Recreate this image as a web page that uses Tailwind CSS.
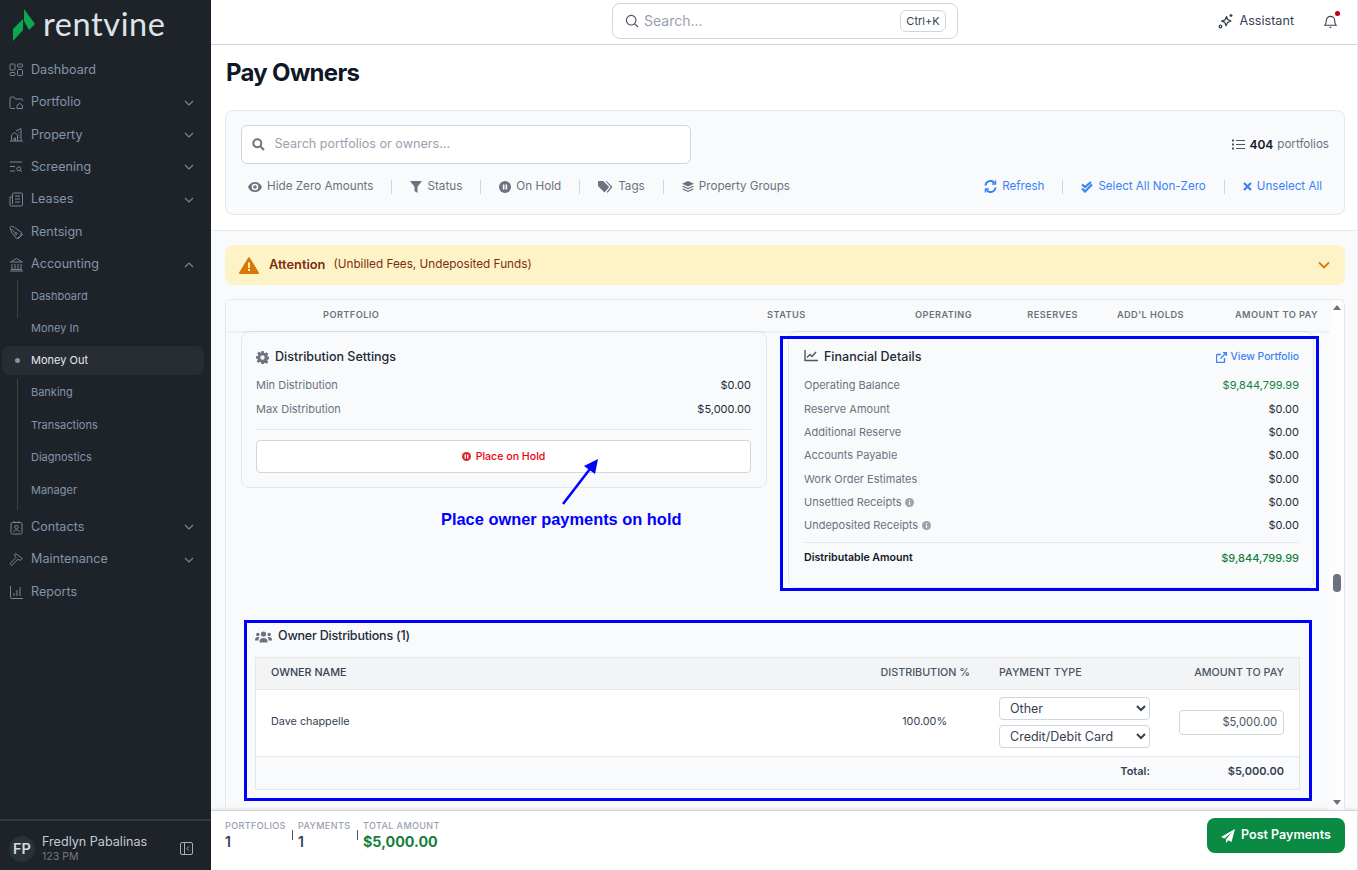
<!DOCTYPE html>
<html lang="en">
<head>
  <meta charset="UTF-8" />
  <title>Pay Owners - Rentvine</title>
  <script src="https://cdn.jsdelivr.net/npm/@tailwindcss/browser@4"></script>
</head>
<body class="font-['Inter',sans-serif] text-gray-800 bg-white">
<div class="relative flex h-[870px] w-[1358px] overflow-hidden">

  <!-- SIDEBAR -->
  <aside class="flex w-[211px] shrink-0 flex-col bg-[#1e2329] text-[#8294ab] text-[12.6px]">
    <div class="flex h-[50px] items-start">
      <svg width="40" height="44" viewBox="0 0 40 44" class="shrink-0"><polygon points="24,9 35,24 29,30 24,21" fill="#0ba84f"/><polygon points="13,29 23,19 23,30 13,41" fill="#0ba84f"/></svg>
      <span class="mt-[2px] ml-[3px] font-['Lato',sans-serif] text-[32.5px] leading-[44px] tracking-[0.6px] text-[#dfe3e7]">rentvine</span>
    </div>
    <nav class="mt-[4px] flex flex-col">
      <a class="flex h-[32.4px] items-center pl-[9px] pr-[17px]">
        <svg class="mr-[8px] text-[#7b8490]" width="14" height="14" viewBox="0 0 14 14" fill="none" stroke="currentColor"><rect x="1" y="1" width="5" height="6" rx="1"/><rect x="8.5" y="1" width="5" height="3" rx="1"/><rect x="1" y="9.5" width="5" height="3" rx="1"/><rect x="8.5" y="6.5" width="5" height="6" rx="1"/></svg>Dashboard</a>
      <a class="flex h-[32.4px] items-center pl-[9px] pr-[17px]">
        <svg class="mr-[7px] text-[#7b8490]" width="15" height="14" viewBox="0 0 15 14" fill="none" stroke="currentColor"><path d="M6 12.5H2.2a1.2 1.2 0 0 1-1.2-1.2V2.2A1.2 1.2 0 0 1 2.2 1h2.6l1.6 2h5.8A1.2 1.2 0 0 1 13.5 4.2V5"/><path d="M8 12.5V9.5l2.7-2.2 2.8 2.2v3z"/></svg>Portfolio
        <svg class="ml-auto" width="10" height="6" viewBox="0 0 10 6" fill="none" stroke="#7b8490" stroke-width="1.2"><path d="M1 1l4 4 4-4"/></svg></a>
      <a class="flex h-[32.4px] items-center pl-[9px] pr-[17px]">
        <svg class="mr-[7px] text-[#7b8490]" width="15" height="15" viewBox="0 0 15 15" fill="none" stroke="currentColor"><path d="M1 14h13M2.5 14V8l3-2.5 3 2.5v6M5 14v-3h1.5v3M7 4l5-2.5V14M9.5 5.5h1M9.5 8h1M9.5 10.5h1"/></svg>Property
        <svg class="ml-auto" width="10" height="6" viewBox="0 0 10 6" fill="none" stroke="#7b8490" stroke-width="1.2"><path d="M1 1l4 4 4-4"/></svg></a>
      <a class="flex h-[32.4px] items-center pl-[9px] pr-[17px]">
        <svg class="mr-[8px] text-[#7b8490]" width="14" height="14" viewBox="0 0 14 14" fill="none" stroke="currentColor"><path d="M1 2h12M1 6.5h5M1 11h5"/><circle cx="9.8" cy="8.8" r="2"/><path d="M11.3 10.3l1.7 1.7"/></svg>Screening
        <svg class="ml-auto" width="10" height="6" viewBox="0 0 10 6" fill="none" stroke="#7b8490" stroke-width="1.2"><path d="M1 1l4 4 4-4"/></svg></a>
      <a class="flex h-[32.4px] items-center pl-[9px] pr-[17px]">
        <svg class="mr-[7px] text-[#7b8490]" width="15" height="15" viewBox="0 0 15 15" fill="none" stroke="currentColor"><path d="M3.5 12V2.2A1.2 1.2 0 0 1 4.7 1h7.6a1.2 1.2 0 0 1 1.2 1.2v10.6a1.2 1.2 0 0 1-1.2 1.2H2.5A1.5 1.5 0 0 1 1 12.5V5h2.5"/><path d="M6 4h5M6 7h5M6 10h5"/></svg>Leases
        <svg class="ml-auto" width="10" height="6" viewBox="0 0 10 6" fill="none" stroke="#7b8490" stroke-width="1.2"><path d="M1 1l4 4 4-4"/></svg></a>
      <a class="flex h-[32.4px] items-center pl-[9px] pr-[17px]">
        <svg class="mr-[7px] text-[#7b8490]" width="15" height="15" viewBox="0 0 15 15" fill="none" stroke="currentColor"><path d="M1 2.5L2.5 1l3 1.5 7 5-1 4-4 2-5-6.5z"/><path d="M2.5 4l4 4"/><circle cx="7.2" cy="8.7" r="1"/><path d="M9 14l5-5"/></svg>Rentsign</a>
      <a class="flex h-[32.4px] items-center pl-[9px] pr-[17px]">
        <svg class="mr-[7px] text-[#7b8490]" width="15" height="15" viewBox="0 0 15 15" fill="none" stroke="currentColor"><path d="M1.5 5L7.5 1.5 13.5 5zM3 7v5M6 7v5M9 7v5M12 7v5M2 12.5h11M1 14h13"/></svg>Accounting
        <svg class="ml-auto" width="10" height="6" viewBox="0 0 10 6" fill="none" stroke="#7b8490" stroke-width="1.2"><path d="M1 5l4-4 4 4"/></svg></a>

      <!-- accounting children -->
      <div class="relative -mt-[1px] text-[11px]">
        <span class="absolute left-[17px] top-0 h-[38px] w-px bg-[#3d434a]"></span>
        <span class="absolute left-[17px] top-[99px] h-[131px] w-px bg-[#3d434a]"></span>
        <a class="relative flex h-[32.5px] items-center pl-[31px]">Dashboard</a>
        <a class="relative flex h-[32.5px] items-center pl-[31px]">Money In</a>
        <a class="relative ml-[2px] mt-[1.5px] flex h-[29px] w-[202px] items-center rounded-lg bg-[#282d33] pl-[29px] text-[#e5e9ee]">
          <span class="absolute left-[13px] h-[5px] w-[5px] rounded-full bg-[#8b929b]"></span>Money Out</a>
        <a class="relative mt-[1px] flex h-[32.5px] items-center pl-[31px]">Banking</a>
        <a class="relative flex h-[32.5px] items-center pl-[31px]">Transactions</a>
        <a class="relative flex h-[32.5px] items-center pl-[31px]">Diagnostics</a>
        <a class="relative flex h-[32.5px] items-center pl-[31px]">Manager</a>
      </div>

      <a class="mt-[5px] flex h-[32.4px] items-center pl-[9px] pr-[17px]">
        <svg class="mr-[7px] text-[#7b8490]" width="15" height="15" viewBox="0 0 15 15" fill="none" stroke="currentColor"><rect x="2" y="2.5" width="11" height="11.5" rx="1.5"/><path d="M5 1v2M10 1v2"/><circle cx="7.5" cy="7" r="1.7"/><path d="M4.5 12c.4-1.5 1.5-2 3-2s2.600.5 3 2"/></svg>Contacts
        <svg class="ml-auto" width="10" height="6" viewBox="0 0 10 6" fill="none" stroke="#7b8490" stroke-width="1.2"><path d="M1 1l4 4 4-4"/></svg></a>
      <a class="flex h-[32.4px] items-center pl-[9px] pr-[17px]">
        <svg class="mr-[7px] text-[#7b8490]" width="15" height="15" viewBox="0 0 15 15" fill="none" stroke="currentColor"><path d="M6.500 1.500l6.800 5-1.800 2-2.500-1.200-6.300 6.200-1.700-1.700 6-6.300-1.500-2.500z"/></svg>Maintenance
        <svg class="ml-auto" width="10" height="6" viewBox="0 0 10 6" fill="none" stroke="#7b8490" stroke-width="1.2"><path d="M1 1l4 4 4-4"/></svg></a>
      <a class="flex h-[32.4px] items-center pl-[9px] pr-[17px]">
        <svg class="mr-[7px] text-[#7b8490]" width="15" height="15" viewBox="0 0 15 15" fill="none" stroke="currentColor"><path d="M1.500 1v11.500a1 1 0 0 0 1 1H14M5 11V8M8 11V5M11 11V2"/></svg>Reports</a>
    </nav>

    <div class="mt-auto flex h-[51px] items-center border-t-2 border-[#343a40] pl-[9px] pr-[18px] pt-[6px]">
      <span class="flex h-[26px] w-[26px] items-center justify-center rounded-full bg-[#2a3237] text-[14.500px] font-semibold text-[#d5d9dd]">FP</span>
      <div class="ml-[7px]">
        <div class="text-[12.6px] leading-[15px] text-[#c5cad0]">Fredlyn Pabalinas</div>
        <div class="text-[10.6px] leading-[15px] text-[#6f7780]">123 PM</div>
      </div>
      <svg class="ml-auto" width="13" height="13" viewBox="0 0 13 13" fill="none" stroke="#aab0b7"><rect x="0.500" y="0.500" width="12" height="12" rx="1.500"/><path d="M4.500 1v11M9 4.500L7 6.500l2 2"/></svg>
    </div>
  </aside>

  <!-- MAIN -->
  <div class="flex min-w-0 flex-1 flex-col border-r border-gray-200">
    <header class="relative flex h-[45px] shrink-0 items-center border-b border-gray-300 bg-white pr-[20px]">
      <div class="absolute left-[401px] top-[3px] flex h-[36px] w-[346px] items-center rounded-lg border border-gray-300 pl-[12px] pr-[11px]">
        <svg width="14" height="14" viewBox="0 0 14 14" fill="none" stroke="#4b5563" stroke-width="1.200"><circle cx="6.200" cy="6.200" r="4.800"/><path d="M9.800 9.800L13 13"/></svg>
        <span class="ml-[5px] -mt-[1px] text-[14px] text-gray-400">Search...</span>
        <span class="ml-auto flex h-[22px] w-[46px] items-center justify-center rounded-md border border-gray-300 text-[11px] text-gray-700">Ctrl+K</span>
      </div>
      <div class="ml-auto flex items-center -mt-[1px]">
        <svg width="16" height="16" viewBox="0 0 16 16" fill="none" stroke="#374151" stroke-width="1.300" stroke-linejoin="round"><path d="M8.500 3.500l1.300 3.200 3.200 1.300-3.200 1.300-1.800 3.400-1.100-3.300-3.300-1.300 3.500-1.300z"/><path d="M13 1v3M11.500 2.500h3"/><circle cx="2.500" cy="13.500" r="1.300"/></svg>
        <span class="ml-[6px] text-[12.600px] text-gray-700">Assistant</span>
        <span class="relative ml-[30px] block">
          <svg class="block" width="13" height="15" viewBox="0 0 14 15" fill="none" stroke="#374151" stroke-width="1.200"><path d="M1 11.500c1-1 1.500-2 1.500-5a4.500 4.500 0 0 1 9 0c0 3 .5 4 1.500 5z"/><path d="M6 13.800h2"/></svg>
          <span class="absolute -right-[3px] -top-[3px] h-[5px] w-[5px] rounded-full bg-red-700"></span>
        </span>
      </div>
    </header>

    <!-- page head + filters -->
    <section class="h-[186px] shrink-0 border-b border-gray-200 bg-white pl-[14px] pr-[12px]">
      <h1 class="ml-px mt-[12px] text-[24px] font-bold leading-[32px] tracking-[-0.7px] text-gray-900">Pay Owners</h1>
      <div class="mt-[21px] h-[105px] rounded-lg border border-gray-200 bg-[#f9fafb] px-[15px] pt-[14px]">
        <div class="flex items-center justify-between">
          <div class="flex h-[39px] w-[450px] items-center rounded-md border border-gray-300 bg-white pl-[10px]">
            <svg width="13" height="13" viewBox="0 0 13 13" fill="none" stroke="#6b7280" stroke-width="2"><circle cx="5.300" cy="5.300" r="4"/><path d="M8.500 8.500L12 12"/></svg>
            <span class="ml-[9.500px] text-[12.600px] text-gray-400">Search portfolios or owners...</span>
          </div>
          <div class="flex items-center text-[11.6px] text-gray-500">
            <svg width="13" height="11" viewBox="0 0 13 11" fill="#4b5563"><rect x="0" y="0.500" width="2" height="2"/><rect x="0" y="4.500" width="2" height="2"/><rect x="0" y="8.500" width="2" height="2"/><rect x="4" y="1" width="9" height="1"/><rect x="4" y="5" width="9" height="1"/><rect x="4" y="9" width="9" height="1"/></svg>
            <b class="ml-[4px] text-[12px] font-semibold text-gray-900">404</b><span class="ml-[4px]">portfolios</span>
          </div>
        </div>
        <div class="mt-[13px] flex h-[20px] items-center pl-[7px] text-[11.7px] text-gray-500">
          <svg width="14" height="10" viewBox="0 0 14 10" fill="#6b7280"><path d="M7 0C3.800 0 1.200 2 0 5c1.200 3 3.800 5 7 5s5.800-2 7-5c-1.200-3-3.800-5-7-5zm0 8.300A3.300 3.300 0 1 1 7 1.700a3.300 3.300 0 0 1 0 6.600zM7 3.200a1.800 1.800 0 1 0 0 3.600 1.800 1.800 0 0 0 0-3.600z"/></svg>
          <span class="ml-[5px]">Hide Zero Amounts</span>
          <span class="ml-[18px] h-[14px] w-px bg-gray-300"></span>
          <svg class="ml-[18px]" width="12" height="12" viewBox="0 0 12 12" fill="#6b7280"><path d="M0 0h12L7.500 5.800V12L4.500 10V5.800z"/></svg>
          <span class="ml-[5px]">Status</span>
          <span class="ml-[18px] h-[14px] w-px bg-gray-300"></span>
          <svg class="ml-[18px]" width="12" height="12" viewBox="0 0 12 12"><circle cx="6" cy="6" r="6" fill="#6b7280"/><rect x="3.800" y="3.500" width="1.700" height="5" fill="#f9fafb"/><rect x="6.500" y="3.500" width="1.700" height="5" fill="#f9fafb"/></svg>
          <span class="ml-[5px]">On Hold</span>
          <span class="ml-[18px] h-[14px] w-px bg-gray-300"></span>
          <svg class="ml-[18px]" width="15" height="12" viewBox="0 0 15 12" fill="#6b7280"><path d="M0 1a1 1 0 0 1 1-1h4.200l6 6-4.700 5.500L0 5z"/><path d="M7.500 0h1l6 6-4.800 5.800-1-.8 4-5z"/></svg>
          <span class="ml-[5px]">Tags</span>
          <span class="ml-[18px] h-[14px] w-px bg-gray-300"></span>
          <svg class="ml-[18px]" width="12" height="12" viewBox="0 0 12 12" fill="#6b7280"><path d="M6 0l6 2.800L6 5.600 0 2.800z"/><path d="M1.300 4.800L6 7l4.700-2.200L12 5.500 6 8.300 0 5.500z"/><path d="M1.300 7.500L6 9.700l4.700-2.200L12 8.200 6 11 0 8.200z"/></svg>
          <span class="ml-[5px]">Property Groups</span>
          <div class="ml-auto flex items-center pr-[7px] text-[11.6px] text-[#3b82f6]">
            <svg width="13" height="13" viewBox="0 0 13 13" fill="none" stroke="#3b82f6" stroke-width="2"><path d="M1.500 5.500A5 5 0 0 1 10.500 3"/><path d="M11.500 7.500A5 5 0 0 1 2.500 10"/><path d="M11.500 0.500v3.500H8" stroke-width="1.500"/><path d="M1.500 12.500V9H5" stroke-width="1.500"/></svg>
            <span class="ml-[5px]">Refresh</span>
            <span class="ml-[18px] h-[14px] w-px bg-gray-300"></span>
            <svg class="ml-[18px]" width="12" height="12" viewBox="0 0 12 12" fill="none" stroke="#3b82f6" stroke-width="2.200"><path d="M1 3.500l3 2.500 6-5"/><path d="M1 7.500l3 3 7-7"/></svg>
            <span class="ml-[5px]">Select All Non-Zero</span>
            <span class="ml-[18px] h-[14px] w-px bg-gray-300"></span>
            <svg class="ml-[18px]" width="9" height="9" viewBox="0 0 9 9" fill="none" stroke="#3b82f6" stroke-width="2.200"><path d="M1 1l7 7M8 1L1 8"/></svg>
            <span class="ml-[5px]">Unselect All</span>
          </div>
        </div>
      </div>
    </section>

    <!-- attention + table -->
    <section class="flex min-h-0 flex-1 flex-col bg-[#f9fafb] pl-[14px] pr-[12px] pt-[14px]">
      <div class="flex h-[40px] shrink-0 items-center rounded-lg bg-[#fef3c7] pl-[14px] pr-[15px]">
        <svg width="20" height="17" viewBox="0 0 20 17"><path d="M10 1.200L19 16H1z" fill="#d97706" stroke="#d97706" stroke-width="2" stroke-linejoin="round"/><rect x="9" y="5.500" width="2" height="5.500" fill="#fef3c7"/><rect x="9" y="12" width="2" height="2" fill="#fef3c7"/></svg>
        <b class="ml-[10px] text-[12.800px] font-semibold text-[#7c2d12]">Attention</b>
        <span class="ml-[8px] text-[11.750px] text-[#7c2d12]">(Unbilled Fees, Undeposited Funds)</span>
        <svg class="ml-auto" width="12" height="8" viewBox="0 0 12 8" fill="none" stroke="#d97706" stroke-width="1.800"><path d="M1 1.500l5 5 5-5"/></svg>
      </div>

      <div class="relative mt-[14px] flex min-h-0 flex-1 flex-col overflow-hidden rounded-t-md border border-b-0 border-gray-200">
        <div class="relative z-10 flex h-[31px] w-[1104px] shrink-0 items-center bg-[#f9fafb] pb-[2px] pl-[97px] text-[9.2px] font-semibold tracking-[0.45px] text-gray-500 shadow-[0_1px_2px_rgba(0,0,0,0.08)]">
          <span class="w-[444px]">PORTFOLIO</span>
          <span class="w-[100px]">STATUS</span>
          <span class="w-[105px] text-right">OPERATING</span>
          <span class="w-[106px] text-right">RESERVES</span>
          <span class="w-[106px] text-right">ADD'L HOLDS</span>
          <span class="w-[134px] text-right">AMOUNT TO PAY</span>
        </div>

        <!-- scrollbar -->
        <div class="absolute right-0 top-0 bottom-0 w-[15px] bg-white/60">
          <span class="absolute left-[3.500px] top-[5px] h-0 w-0 border-x-[4.500px] border-b-[5px] border-x-transparent border-b-gray-500"></span>
          <span class="absolute left-[4px] top-[274px] h-[18px] w-[8px] rounded-full bg-gray-500"></span>
          <span class="absolute bottom-[5px] left-[3.500px] h-0 w-0 border-x-[4.500px] border-t-[5px] border-x-transparent border-t-gray-500"></span>
        </div>

        <div class="min-h-0 flex-1 pl-[15px] text-[11px]">
          <div class="flex items-start gap-[21px]">
            <div class="h-[157px] w-[526px] rounded-lg border border-gray-200 pl-[14px] pr-[15px] pt-[15px]">
              <div class="flex h-[20px] items-center text-[12.500px] font-medium text-gray-800">
                <svg class="mr-[6px]" width="13" height="13" viewBox="0 0 13 13" fill="#6b7280"><path d="M5.300 0h2.400l.3 1.800 1.100.5L10.600 1.200l1.700 1.700-1.100 1.500.5 1.100 1.800.3v2.400l-1.800.3-.5 1.100 1.100 1.500-1.700 1.700-1.500-1.100-1.100.5-.3 1.800H5.300L5 11.300l-1.100-.5-1.500 1.100L.7 10.200l1.100-1.500-.5-1.100L0 7.700V5.300l1.800-.3.500-1.100L1.200 2.400 2.900.700l1.500 1.100 1.100-.5zM6.500 4.300a2.200 2.200 0 1 0 0 4.400 2.200 2.200 0 0 0 0-4.400z" fill-rule="evenodd"/></svg>Distribution Settings
              </div>
              <div class="mt-[6px] flex h-[24px] items-center justify-between"><span class="text-gray-500">Min Distribution</span><span class="text-gray-800">$0.00</span></div>
              <div class="flex h-[24px] items-center justify-between"><span class="text-gray-500">Max Distribution</span><span class="text-gray-800">$5,000.00</span></div>
              <div class="mt-[8px] border-t border-gray-200"></div>
              <button class="mt-[10px] flex h-[33px] w-full items-center justify-center rounded border border-gray-300 bg-white text-[10.600px] font-medium text-red-600">
                <svg class="mr-[5px]" width="9" height="9" viewBox="0 0 9 9"><circle cx="4.500" cy="4.500" r="4.500" fill="#dc2626"/><rect x="2.600" y="2.500" width="1.400" height="4" fill="#fff"/><rect x="5" y="2.500" width="1.400" height="4" fill="#fff"/></svg>Place on Hold</button>
            </div>
            <div class="h-[257px] w-[526px] rounded-lg border border-gray-200 pl-[15px] pr-[14px] pt-[15px]">
              <div class="flex h-[20px] items-center text-[12.500px] font-medium text-gray-800">
                <svg class="mr-[6px] -mt-[2px]" width="14" height="12" viewBox="0 0 14 12" fill="none" stroke="#4b5563" stroke-width="1.400"><path d="M1 0v10.500h13"/><path d="M3 7.500l3-3 2 2 4-4.500"/></svg>Financial Details
                <span class="ml-auto flex items-center text-[10.300px] font-medium text-[#3b82f6]">
                  <svg class="mr-[4px]" width="11" height="11" viewBox="0 0 11 11" fill="none" stroke="#3b82f6" stroke-width="1.300"><path d="M8.500 6v3.500a1 1 0 0 1-1 1h-6a1 1 0 0 1-1-1v-6a1 1 0 0 1 1-1H5"/><path d="M4.500 6.500L10 1M7 .7h3.300V4"/></svg>View Portfolio</span>
              </div>
              <div class="mt-[7px] flex h-[23.300px] items-center justify-between"><span class="text-gray-500">Operating Balance</span><span class="text-[#15803d]">$9,844,799.99</span></div>
              <div class="flex h-[23.300px] items-center justify-between"><span class="text-gray-500">Reserve Amount</span><span class="text-gray-800">$0.00</span></div>
              <div class="flex h-[23.300px] items-center justify-between"><span class="text-gray-500">Additional Reserve</span><span class="text-gray-800">$0.00</span></div>
              <div class="flex h-[23.300px] items-center justify-between"><span class="text-gray-500">Accounts Payable</span><span class="text-gray-800">$0.00</span></div>
              <div class="flex h-[23.300px] items-center justify-between"><span class="text-gray-500">Work Order Estimates</span><span class="text-gray-800">$0.00</span></div>
              <div class="flex h-[23.300px] items-center justify-between"><span class="flex items-center text-gray-500">Unsettled Receipts<svg class="ml-[4px]" width="9" height="9" viewBox="0 0 9 9"><circle cx="4.500" cy="4.500" r="4.500" fill="#9ca3af"/><rect x="4" y="4" width="1.100" height="3" fill="#fff"/><rect x="4" y="2" width="1.100" height="1.200" fill="#fff"/></svg></span><span class="text-gray-800">$0.00</span></div>
              <div class="flex h-[23.300px] items-center justify-between"><span class="flex items-center text-gray-500">Undeposited Receipts<svg class="ml-[4px]" width="9" height="9" viewBox="0 0 9 9"><circle cx="4.500" cy="4.500" r="4.500" fill="#9ca3af"/><rect x="4" y="4" width="1.100" height="3" fill="#fff"/><rect x="4" y="2" width="1.100" height="1.200" fill="#fff"/></svg></span><span class="text-gray-800">$0.00</span></div>
              <div class="mt-[5px] border-t border-gray-200"></div>
              <div class="mt-[4px] flex h-[22px] items-center justify-between font-semibold"><span class="text-[10.600px] text-gray-900">Distributable Amount</span><span class="font-medium text-[#15803d]">$9,844,799.99</span></div>
            </div>
          </div>

          <!-- owner distributions -->
          <div class="ml-[14px] mt-[37px] w-[1045px]">
            <div class="flex h-[20px] items-center pt-[3px] text-[12.500px] font-medium tracking-[-0.2px] text-gray-800">
              <svg class="mr-[6px]" width="17" height="12" viewBox="0 0 17 12" fill="#6b7280"><circle cx="8.500" cy="3" r="2.600"/><circle cx="2.800" cy="3.500" r="1.700"/><circle cx="14.200" cy="3.500" r="1.700"/><path d="M4.500 11a4 4 0 0 1 8 0v.6h-8z"/><path d="M0 9a2.800 2.800 0 0 1 4.300-2.600A5 5 0 0 0 3.500 9.500H0zM17 9a2.800 2.800 0 0 0-4.300-2.600 5 5 0 0 1 .8 3.100H17z"/></svg>Owner Distributions (1)
            </div>
            <div class="mt-[12px] border border-gray-200">
              <div class="flex h-[32px] items-center border-b border-gray-200 bg-[#f3f4f6] px-[15px] text-[10.750px] font-medium text-gray-600">
                <span class="flex-1 text-gray-700">OWNER NAME</span>
                <span class="w-[120px] text-right">DISTRIBUTION %</span>
                <span class="ml-[29px] w-[151px]">PAYMENT TYPE</span>
                <span class="w-[134px] text-right">AMOUNT TO PAY</span>
              </div>
              <div class="flex h-[67px] items-center border-b border-gray-200 bg-white px-[15px] pb-[1px] text-[10.800px] text-gray-700">
                <span class="flex-1">Dave chappelle</span>
                <span class="w-[120px] pr-[23px] text-right">100.00%</span>
                <div class="ml-[29px] flex w-[151px] flex-col gap-[5px]">
                  <select class="h-[23px] w-full rounded border border-gray-300 bg-white pl-[6px] text-[12.500px] text-gray-700"><option>Other</option></select>
                  <select class="h-[23px] w-full rounded border border-gray-300 bg-white pl-[6px] text-[12.500px] text-gray-700"><option>Credit/Debit Card</option></select>
                </div>
                <div class="flex w-[134px] justify-end">
                  <span class="flex h-[25px] w-[105px] items-center justify-end rounded border border-gray-300 bg-white pr-[6px] text-[11.200px] text-gray-600">$5,000.00</span>
                </div>
              </div>
              <div class="flex h-[32px] items-center bg-[#f9fafb] px-[15px] pb-[3px] text-[11px] font-semibold text-gray-700">
                <span class="flex-1 text-right">Total:</span>
                <span class="w-[134px] text-right">$5,000.00</span>
              </div>
            </div>
          </div>
        </div>
      </div>
    </section>

    <!-- totals -->
    <footer class="flex h-[60px] shrink-0 border-t border-gray-300 bg-white pl-[14px] pr-[12px] shadow-[0_-1px_3px_rgba(0,0,0,0.1)]">
      <div class="mt-[9px] w-[67px]">
        <div class="text-[9px] font-medium leading-[11px] tracking-[0.4px] text-gray-400">PORTFOLIOS</div>
        <div class="mt-[2px] text-[14px] font-semibold leading-[18px] text-gray-700">1</div>
      </div>
      <div class="relative mt-[9px] w-[65px] pl-[6px]">
        <span class="absolute left-0 top-[10px] h-[10px] w-px bg-gray-600"></span>
        <div class="text-[9px] font-medium leading-[11px] tracking-[0.4px] text-gray-400">PAYMENTS</div>
        <div class="mt-[2px] text-[14px] font-semibold leading-[18px] text-gray-700">1</div>
      </div>
      <div class="relative mt-[9px] pl-[6px]">
        <span class="absolute left-0 top-[10px] h-[10px] w-px bg-gray-600"></span>
        <div class="text-[9px] font-medium leading-[11px] tracking-[0.4px] text-gray-400">TOTAL AMOUNT</div>
        <div class="mt-[2px] text-[14.300px] font-bold leading-[18px] text-[#15803d]">$5,000.00</div>
      </div>
      <button class="ml-auto mt-[7px] flex h-[35px] w-[138px] items-center justify-center rounded-lg bg-[#0a8a43] text-[12.500px] font-semibold text-white">
        <svg class="mr-[6px]" width="14" height="14" viewBox="0 0 14 14" fill="#fff"><path d="M14 0L0 8l3.500 1.500L11 3 5 10.500V14l2.300-2.800L10.500 13z"/></svg>Post Payments</button>
    </footer>
  </div>

  <!-- annotations drawn over the screenshot -->
  <div class="absolute left-[780px] top-[336px] h-[255px] w-[539px] border-[3px] border-[#0000ff]"></div>
  <div class="absolute left-[244px] top-[620px] h-[181px] w-[1068px] border-[3px] border-[#0000ff]"></div>
  <svg class="absolute left-[555px] top-[452px]" width="50" height="56" viewBox="0 0 50 56" fill="none"><path d="M8 52L38 13" stroke="#0000ff" stroke-width="2.500"/><path d="M43 7L40 22 29 14z" fill="#0000ff"/></svg>
  <span class="absolute left-[441px] top-[510px] font-['Liberation_Sans',sans-serif] text-[16.4px] font-bold leading-[18px] text-[#0000ff]">Place owner payments on hold</span>
</div>
</body>
</html>
